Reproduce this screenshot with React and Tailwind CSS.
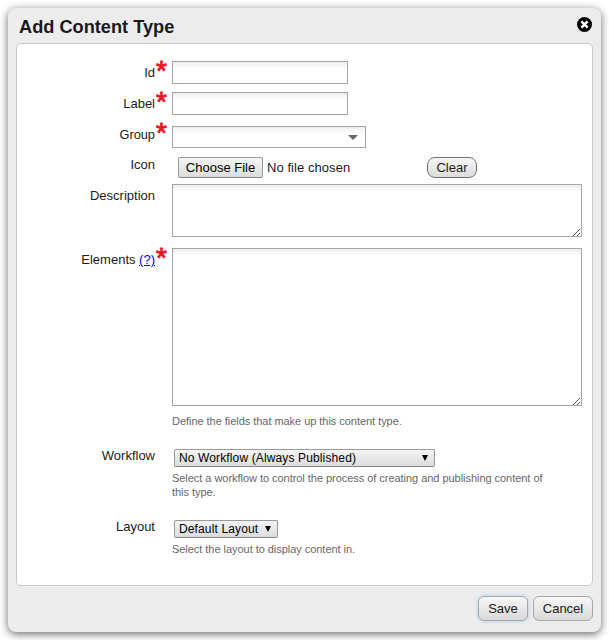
function Row({ label, required, className, children }) {
  return (
    <div className={`flex items-start ${className}`}>
      <div className="w-[138px] shrink-0 pt-1 text-right leading-4">{label}</div>
      <div className="-mt-[3px] h-4 w-[17px] shrink-0 pl-px text-[28px] leading-[26px] text-[#f0141e] [-webkit-text-stroke:0.9px_#f0141e]">
        {required ? "*" : ""}
      </div>
      <div className="w-[410px] shrink-0">{children}</div>
    </div>
  );
}

function Field({ className, children }) {
  return (
    <div className={`border border-[#a5a5a5] bg-linear-to-b from-[#eeeeee] to-white to-[7px] ${className}`}>
      {children}
    </div>
  );
}

function Grip() {
  return (
    <svg width="8" height="8" viewBox="0 0 8 8" className="block" shapeRendering="crispEdges">
      <path
        d="M0 7h1v1h-1zM1 6h1v1h-1zM2 5h1v1h-1zM3 4h1v1h-1zM4 3h1v1h-1zM5 2h1v1h-1zM6 1h1v1h-1zM4 7h1v1h-1zM5 6h1v1h-1zM6 5h1v1h-1z"
        fill="#555"
      />
    </svg>
  );
}

function Select({ className, children }) {
  return (
    <div className={`ml-[2px] h-[18px] flex items-center justify-between rounded-[2px] border border-[#999] border-b-[#858585] bg-linear-to-b from-[#f4f4f4] to-[#dcdcdc] pl-1 pr-[6px] text-[12px] leading-4 tracking-[0.13px] text-black ${className}`}>
      <span className="whitespace-nowrap">{children}</span>
      <svg width="6" height="6" viewBox="0 0 6 6">
        <path d="M0 0h6L3 6z" fill="#000" />
      </svg>
    </div>
  );
}

function Hint({ className, children }) {
  return <p className={`text-[11px] leading-[14px] tracking-[-0.04px] text-[#666] ${className}`}>{children}</p>;
}

function Button({ className, children }) {
  return (
    <button className={`h-[25px] rounded-[6px] border border-[#a6a6a6] bg-linear-to-b from-[#f7f7f7] to-[#d9d9d9] text-[13px] leading-4 ${className}`}>
      {children}
    </button>
  );
}

export default function App() {
  return (
    <div className="h-[640px] w-[609px] overflow-hidden bg-white p-2 font-['Liberation_Sans',Arial,sans-serif] text-[13px] text-[#1a1a1a]">
      <div className="flex h-[624px] w-[593px] flex-col rounded-[8px] bg-[#ececec] px-2 shadow-[0_2px_9px_rgba(0,0,0,0.6)]">
        <div className="flex h-[35px] shrink-0 items-start justify-between pl-[3px] pr-[1px]">
          <h1 className="pt-[7px] text-[18.2px] leading-6 font-bold">Add Content Type</h1>
          <svg width="15" height="15" viewBox="0 0 15 15" className="mt-[9px]">
            <circle cx="7.5" cy="7.5" r="7.5" fill="#000" />
            <path d="M5.3 5.3l4.4 4.4M9.7 5.3l-4.4 4.4" stroke="#fff" strokeWidth="2.5" strokeLinecap="square" />
          </svg>
        </div>
        <div className="h-[543px] shrink-0 rounded-[5px] border border-[#c8c8c8] bg-white pt-[17px]">
          <Row label="Id" required className="h-[31px]">
            <Field className="h-[23px] w-[176px]" />
          </Row>
          <Row label="Label" required className="h-[31px]">
            <Field className="h-[23px] w-[176px]" />
          </Row>
          <Row label={<span className="text-[12.8px]">Group</span>} required className="h-[30px]">
            <Field className="mt-[3px] flex h-[22px] w-[194px] items-center justify-end pr-[7px]">
              <svg width="10" height="5" viewBox="0 0 10 5">
                <path d="M0 0h10L5 5z" fill="#666" />
              </svg>
            </Field>
          </Row>
          <Row label="Icon" className="h-[31px]">
            <div className="flex items-center pt-1">
              <button className="ml-[6px] h-[21px] w-[85px] rounded-[2px] border border-[#999] border-b-[#858585] bg-linear-to-b from-[#f6f6f6] to-[#dcdcdc] text-[13px] leading-4 text-black">
                Choose File
              </button>
              <span className="ml-1 w-[160px] leading-4 tracking-[0.06px]">No file chosen</span>
              <button className="h-[21px] w-[50px] rounded-[8px] border border-[#707070] bg-linear-to-b from-[#f6f6f6] to-[#dcdcdc] text-[13px] leading-4">
                Clear
              </button>
            </div>
          </Row>
          <Row label="Description" className="h-[64px]">
            <Field className="flex h-[53px] items-end justify-end">
              <Grip />
            </Field>
          </Row>
          <Row
            label={<>Elements <a href="#" className="text-[#0000ee] underline">(?)</a></>}
            required
            className="h-[196px]"
          >
            <Field className="flex h-[158px] items-end justify-end">
              <Grip />
            </Field>
            <Hint className="mt-2">Define the fields that make up this content type.</Hint>
          </Row>
          <Row label="Workflow" className="h-[71px]">
            <div className="pt-[5px]">
              <Select className="w-[261px]">No Workflow (Always Published)</Select>
              <Hint className="mt-1 w-[390px]">
                Select a workflow to control the process of creating and publishing content of this type.
              </Hint>
            </div>
          </Row>
          <Row label="Layout" className="h-[50px]">
            <div className="pt-[5px]">
              <Select className="w-[104px]">Default Layout</Select>
              <Hint className="mt-1">Select the layout to display content in.</Hint>
            </div>
          </Row>
        </div>
        <div className="flex justify-end gap-[5px] pt-[10px]">
          <Button className="w-[50px] shadow-[0_0_4px_#a9cfe6]">Save</Button>
          <Button className="w-[60px]">Cancel</Button>
        </div>
      </div>
    </div>
  );
}
